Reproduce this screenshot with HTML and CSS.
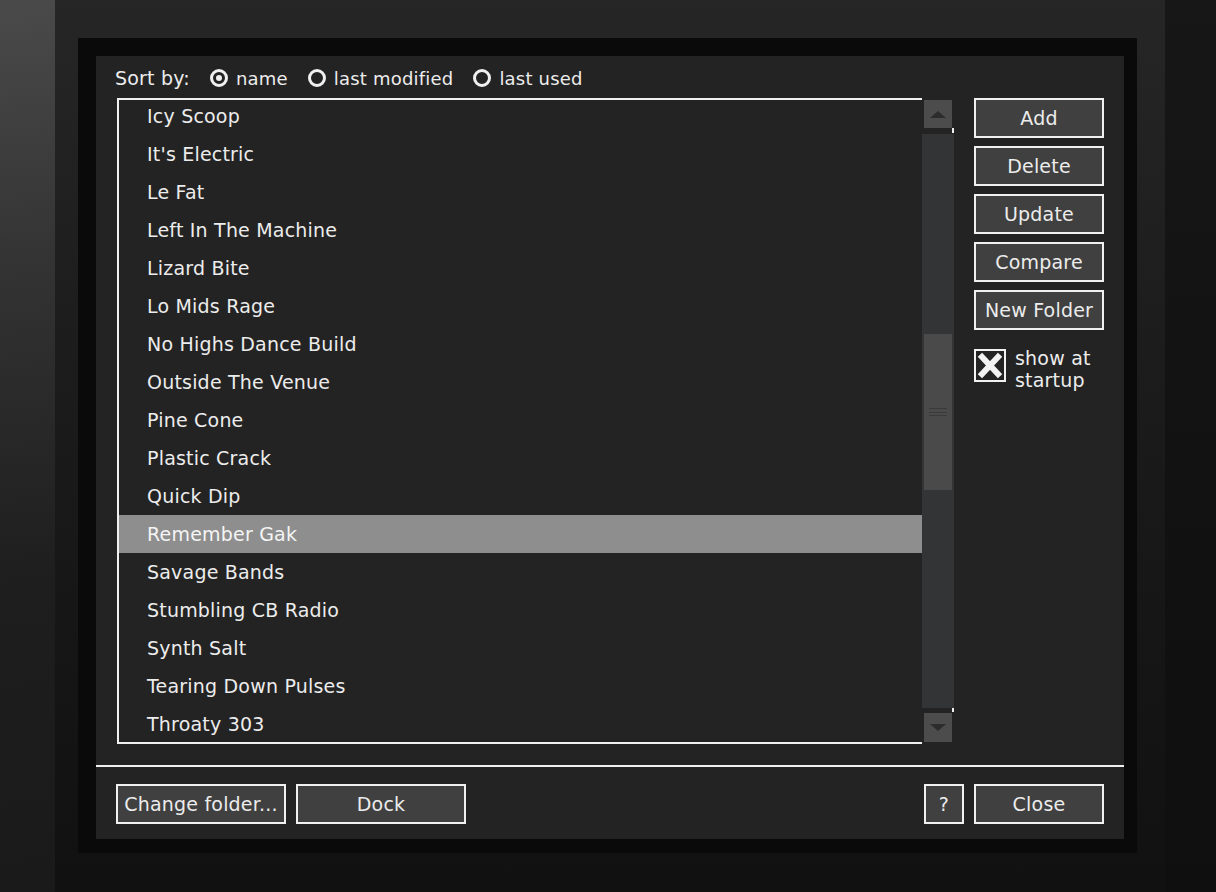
FILE: index.html
```html
<!DOCTYPE html>
<html>
<head>
<meta charset="utf-8">
<title>Presets</title>
<link rel="stylesheet" href="styles.css">
</head>
<body>
<div class="screen">
  <div class="strip-left"></div>
  <div class="desk">
    <div class="frame">
      <div class="panel">
        <div class="sortbar">
          <span class="sort-label">Sort by:</span>
          <span class="radio selected"></span><span class="radio-label">name</span>
          <span class="radio"></span><span class="radio-label">last modified</span>
          <span class="radio"></span><span class="radio-label">last used</span>
        </div>
        <div class="main">
          <div class="listbox">
            <ul class="list">
              <li>Icy Scoop</li>
              <li>It's Electric</li>
              <li>Le Fat</li>
              <li>Left In The Machine</li>
              <li>Lizard Bite</li>
              <li>Lo Mids Rage</li>
              <li>No Highs Dance Build</li>
              <li>Outside The Venue</li>
              <li>Pine Cone</li>
              <li>Plastic Crack</li>
              <li>Quick Dip</li>
              <li class="active">Remember Gak</li>
              <li>Savage Bands</li>
              <li>Stumbling CB Radio</li>
              <li>Synth Salt</li>
              <li>Tearing Down Pulses</li>
              <li>Throaty 303</li>
            </ul>
          </div>
          <div class="scrollbar">
            <div class="sb-btn sb-up"><span class="tri-up"></span></div>
            <div class="sb-gap"><span class="tick"></span></div>
            <div class="sb-track">
              <div class="sb-thumb"><span class="grip"></span></div>
            </div>
            <div class="sb-gap sb-gap-bottom"><span class="tick"></span></div>
            <div class="sb-btn sb-down"><span class="tri-down"></span></div>
          </div>
          <div class="side">
            <div class="btn">Add</div>
            <div class="btn">Delete</div>
            <div class="btn">Update</div>
            <div class="btn">Compare</div>
            <div class="btn">New Folder</div>
            <div class="check-row">
              <svg class="checkbox" width="32" height="33" viewBox="0 0 32 33">
                <rect x="1" y="1" width="30" height="31" fill="#232323" stroke="#f2f2f2" stroke-width="2"/>
                <path d="M8 8 L24 25 M24 8 L8 25" stroke="#f2f2f2" stroke-width="6" stroke-linecap="square"/>
              </svg>
              <span class="check-label">show at<br>startup</span>
            </div>
          </div>
        </div>
        <div class="sep"></div>
        <div class="footer">
          <div class="btn btn-wide">Change folder...</div>
          <div class="btn btn-wide">Dock</div>
          <div class="spacer"></div>
          <div class="btn btn-help">?</div>
          <div class="btn">Close</div>
        </div>
      </div>
    </div>
  </div>
  <div class="strip-right"></div>
</div>
</body>
</html>
```
FILE: styles.css
```css
* { box-sizing: border-box; }
html, body { margin: 0; padding: 0; background: #111; }
body {
  font-family: "DejaVu Sans", "Verdana", sans-serif;
  color: #ececec;
  letter-spacing: 0.2px;
}
.screen {
  width: 1216px;
  height: 892px;
  display: flex;
  overflow: hidden;
  background: #121212;
}
.strip-left {
  width: 55px;
  flex: none;
  background: linear-gradient(175deg, #4a4a4a 0%, #333 30%, #1e1e1e 65%, #1a1a1a 100%);
}
.desk {
  width: 1110px;
  flex: none;
  padding: 38px 0 0 23px;
  background: linear-gradient(180deg, #262626 0%, #1c1c1c 40%, #151515 75%, #111 100%);
}
.strip-right {
  flex: 1;
  background: linear-gradient(180deg, #171717 0%, #121212 50%, #0f0f0f 100%);
}
.frame {
  width: 1059px;
  height: 815px;
  padding: 18px 13px 14px 18px;
  background: #0a0a0a;
}
.panel {
  width: 1028px;
  height: 783px;
  background: #232323;
  display: flex;
  flex-direction: column;
}
.sortbar {
  height: 42px;
  padding: 2px 0 0 19px;
  display: flex;
  align-items: center;
  font-size: 18px;
}
.sort-label { font-size: 19px; margin-right: 20px; }
.radio {
  width: 18px;
  height: 18px;
  border: 3px solid #f0f0f0;
  border-radius: 50%;
  margin-right: 8px;
  display: inline-flex;
  align-items: center;
  justify-content: center;
}
.radio.selected::after {
  content: "";
  width: 6px;
  height: 6px;
  border-radius: 50%;
  background: #f0f0f0;
}
.radio-label { margin-right: 20px; }
.main {
  height: 646px;
  margin-left: 21px;
  display: flex;
}
.listbox {
  width: 805px;
  height: 646px;
  border: 2px solid #f0f0f0;
  border-right: none;
  overflow: hidden;
}
.list {
  list-style: none;
  margin: -3px 0 0 0;
  padding: 0;
}
.list li {
  height: 38px;
  line-height: 38px;
  padding-left: 28px;
  font-size: 19px;
  color: #ececec;
  white-space: nowrap;
}
.list li.active {
  background: #8e8e8e;
  color: #f4f4f4;
}
.scrollbar {
  width: 32px;
  height: 646px;
  display: flex;
  flex-direction: column;
}
.sb-btn {
  margin: 0 2px;
  background: #4c4c4c;
  display: flex;
  align-items: center;
  justify-content: center;
}
.sb-up { margin-top: 2px; height: 28px; }
.sb-down { height: 29px; }
.tri-up {
  width: 0; height: 0;
  border-left: 8px solid transparent;
  border-right: 8px solid transparent;
  border-bottom: 7px solid #2c2c2c;
}
.tri-down {
  width: 0; height: 0;
  border-left: 8px solid transparent;
  border-right: 8px solid transparent;
  border-top: 7px solid #2c2c2c;
}
.sb-gap {
  height: 6px;
  display: flex;
  justify-content: flex-end;
}
.sb-gap-bottom { height: 5px; }
.tick {
  width: 2px;
  height: 5px;
  background: #f0f0f0;
}
.sb-gap-bottom .tick { height: 4px; }
.sb-track {
  height: 574px;
  background: #333436;
  padding-top: 200px;
}
.sb-thumb {
  height: 156px;
  margin: 0 2px;
  background: #4a4a4a;
  display: flex;
  align-items: center;
  justify-content: center;
}
.grip {
  width: 18px;
  height: 8px;
  border-top: 1px solid #3a3a3a;
  border-bottom: 1px solid #3a3a3a;
  background: linear-gradient(#4a4a4a 3px, #3a3a3a 3px, #3a3a3a 4px, #4a4a4a 4px);
}
.side {
  width: 130px;
  margin-left: 20px;
  display: flex;
  flex-direction: column;
  gap: 8px;
}
.btn {
  width: 130px;
  height: 40px;
  border: 2px solid #f0f0f0;
  background: #404040;
  color: #ececec;
  font-size: 19px;
  display: flex;
  align-items: center;
  justify-content: center;
  white-space: nowrap;
}
.check-row {
  margin-top: 11px;
  display: flex;
  align-items: flex-start;
}
.checkbox { flex: none; }
.check-label {
  margin-left: 9px;
  margin-top: -2px;
  font-size: 19px;
  line-height: 22px;
  color: #ececec;
}
.sep {
  height: 2px;
  margin-top: 21px;
  background: #f0f0f0;
}
.footer {
  margin-top: 17px;
  padding: 0 20px;
  display: flex;
  gap: 10px;
}
.btn-wide { width: 170px; }
.btn-help { width: 40px; }
.spacer { flex: 1; }
```
